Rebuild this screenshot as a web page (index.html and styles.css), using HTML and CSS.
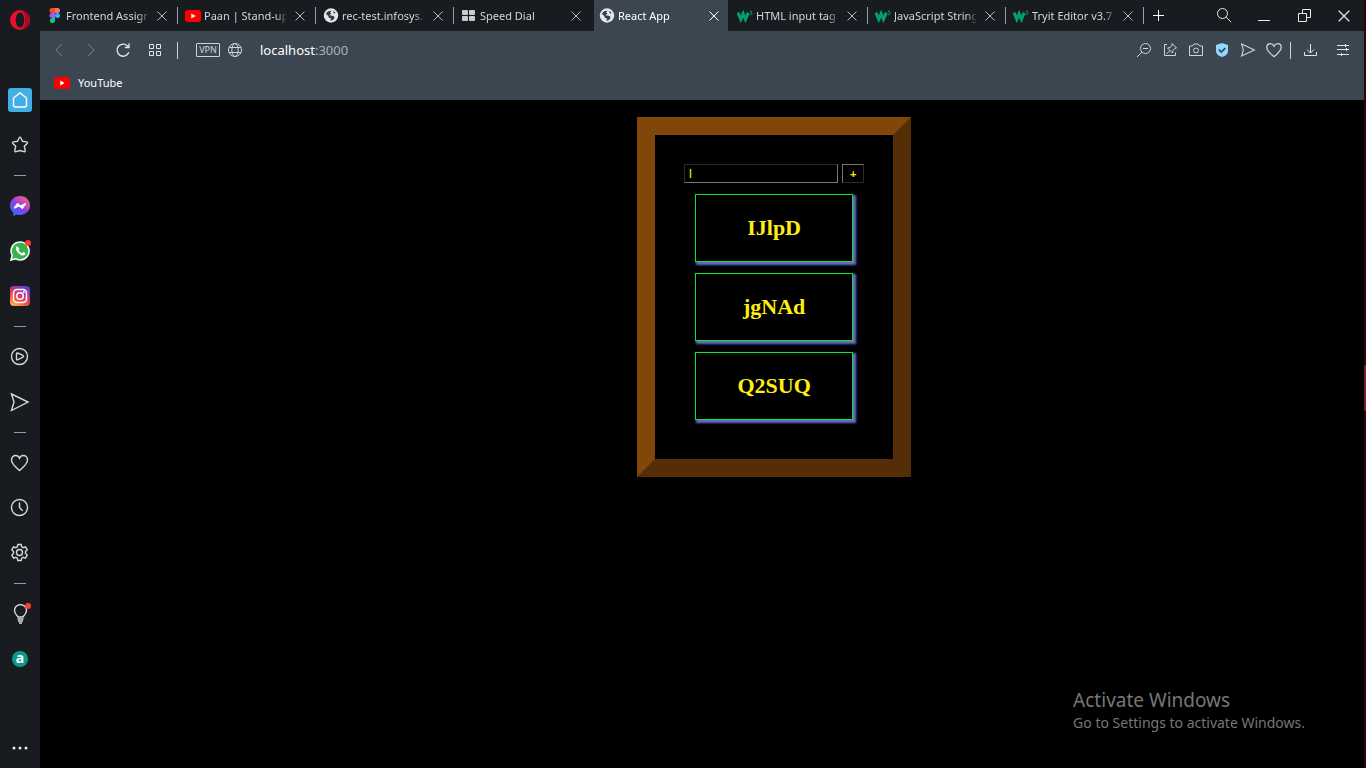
FILE: index.html
```html
<!DOCTYPE html>
<html lang="en">
<head>
<meta charset="utf-8">
<title>React App</title>
<link rel="stylesheet" href="styles.css">
</head>
<body>
<svg class="defs" aria-hidden="true">
  <symbol id="close" viewBox="0 0 12 12"><path d="M1.5 1.5l9 9M10.5 1.5l-9 9"/></symbol>
  <symbol id="youtube" viewBox="0 0 16 12"><rect width="16" height="12" rx="3" fill="#f00" stroke="none"/><path d="M6.3 3.6v4.8L10.6 6z" fill="#fff" stroke="none"/></symbol>
  <symbol id="earth" viewBox="0 0 16 16"><circle cx="8" cy="7.500" r="7.200" fill="#e4e7ea" stroke="none"/><path d="M3 6C4 3.500 6 2.500 8.500 2.700L7 4.700l1.500.8-2 1.700 3.800.8c1.300.3 1.500 1.800.7 2.800-.8 1.200-2.200 2-3.800 1.900l1-2-2.600-1.200-.2-1.600z" fill="#343c44" stroke="none"/><path d="M10 2.700l2.600 2-1.600 1z" fill="#343c44" stroke="none"/></symbol>
  <symbol id="w3" viewBox="0 0 17 12"><path d="M1 2.500l3 7 2.500-6 2.500 6L12 2.500" fill="none" stroke="#04a06c" stroke-width="3.200" stroke-linejoin="miter"/><path d="M13.600 1h2.200l-1 1.600c1.800.2 1.300 2.400-1.200 2" fill="none" stroke="#04a06c" stroke-width="1"/></symbol>
  <symbol id="heart" viewBox="0 0 20 20"><path d="M10 17.500C6 14 2 11 2 7.200 2 4.700 3.800 3 6 3c1.800 0 3.200 1 4 2.700C10.800 4 12.200 3 14 3c2.200 0 4 1.700 4 4.200 0 3.800-4 6.800-8 10.300z"/></symbol>
  <symbol id="send" viewBox="0 0 20 20"><path d="M2 2.500L18 10 2 17.500 4.200 10z"/></symbol>
</svg>

<div class="browser">
  <nav class="sidebar" aria-label="Sidebar">
    <button class="opera" aria-label="Opera menu"><svg width="20" height="20" viewBox="0 0 20 20"><path fill="#e9102c" stroke="none" fill-rule="evenodd" d="M10 0a10 10 0 100 20 10 10 0 000-20zm0 2.400c2.400 0 4.300 3.400 4.300 7.600s-1.900 7.600-4.300 7.600S5.700 14.200 5.700 10 7.600 2.400 10 2.400z"/><path fill="#a80a20" stroke="none" d="M10.500.2c5 .3 9.300 4.400 9.300 9.800s-4.200 9.500-9.300 9.800c2.800-1 4.800-5 4.800-9.800S13.300 1.200 10.500.2z"/></svg></button>
    <a class="side home" href="#" aria-label="Home"><svg width="24" height="24" viewBox="0 0 24 24"><path d="M5.500 10L12 5l6.500 5v7a2 2 0 01-2 2h-9a2 2 0 01-2-2z"/></svg></a>
    <a class="side" href="#" aria-label="Bookmarks"><svg width="20" height="20" viewBox="0 0 20 20"><path d="M9.100 3q.9-1.700 1.800 0l1.600 3.300 4 .6q1.700.4.6 1.600L14.300 11.200l.9 4.300q.1 1.700-1.400 1.200L10 15.500l-3.800 1.200q-1.500.5-1.400-1.200l.9-4.300L2.900 8.500Q1.800 7.300 3.500 6.900l4-.6z"/></svg></a>
    <hr class="rule">
    <a class="side" href="#" aria-label="Messenger"><svg width="20" height="20" viewBox="0 0 20 20"><defs><linearGradient id="gm" x1="0" y1="1" x2=".8" y2="0"><stop offset="0" stop-color="#078bff"/><stop offset=".5" stop-color="#8b39ee"/><stop offset="1" stop-color="#ff6371"/></linearGradient></defs><path d="M10 0C4.300 0 0 4.100 0 9.500c0 2.900 1.200 5.300 3.300 7V20l3-1.600c1.200.4 2.400.5 3.700.5 5.700 0 10-4.100 10-9.400S15.700 0 10 0z" fill="url(#gm)" stroke="none"/><path d="M4.200 12.200L7.600 7.700l3.100 2.500 4.900-2.500-3.300 4.500-3.200-2.500z" fill="#fff" stroke="#fff"/></svg></a>
    <a class="side" href="#" aria-label="WhatsApp"><svg width="20" height="20" viewBox="0 0 20 20"><path d="M1 19l1.200-4.600A9 9 0 1110.500 19a9 9 0 01-4.700-1.300z" fill="#38b34a" stroke="#f3f5f3" stroke-width="1.600"/><path d="M7.200 5.300C5.500 5.800 5.300 8 7 10.600c1.900 2.900 5.500 4.900 7.500 3.500.9-.6 1.100-1.800.7-2.100l-2-1-1.100 1.300c-1.700-.7-3-2-3.600-3.400l.9-1.200z" fill="#fff" stroke="none"/></svg><i class="dot"></i></a>
    <a class="side" href="#" aria-label="Instagram"><svg width="20" height="20" viewBox="0 0 20 20"><defs><linearGradient id="gi" x1=".1" y1="1" x2=".7" y2="0"><stop offset="0" stop-color="#fdc354"/><stop offset=".35" stop-color="#f6533c"/><stop offset=".65" stop-color="#c8348d"/><stop offset="1" stop-color="#5d42c9"/></linearGradient></defs><rect width="20" height="20" rx="4" fill="url(#gi)" stroke="none"/><g stroke="#fff" stroke-width="1.500"><rect x="3.500" y="3.500" width="13" height="13" rx="3.500"/><circle cx="10" cy="10" r="3.300"/></g><circle cx="13.900" cy="6.100" r="1" fill="#fff" stroke="none"/></svg></a>
    <hr class="rule">
    <a class="side" href="#" aria-label="Player"><svg width="20" height="20" viewBox="0 0 20 20"><circle cx="9.500" cy="9.500" r="8"/><path d="M6.500 6.700q0-1 1-.7l5 2.200q2 1 0 2.200l-5 2.400q-1 .4-1-.7z"/></svg></a>
    <a class="side" href="#" aria-label="My Flow"><svg width="20" height="20" viewBox="0 0 20 20"><path d="M1.500 2L18 10 1.500 18.500 4 10z"/></svg></a>
    <hr class="rule">
    <a class="side" href="#" aria-label="Favourites"><svg width="20" height="20" viewBox="0 0 20 20"><path d="M9.500 17.500C5.500 14 1.500 11 1.500 7 1.500 4.400 3.400 2.500 5.600 2.500c1.800 0 3.200 1 3.900 2.700.7-1.700 2.100-2.700 3.900-2.700 2.200 0 4.100 1.900 4.100 4.500 0 4-4 7-8 10.500z"/></svg></a>
    <a class="side" href="#" aria-label="History"><svg width="20" height="20" viewBox="0 0 20 20"><circle cx="9.500" cy="9.500" r="8"/><path d="M9.500 4.500v5l3.200 3.200"/></svg></a>
    <a class="side" href="#" aria-label="Settings"><svg width="20" height="20" viewBox="0.500 0.500 20 20"><circle cx="10" cy="10" r="3"/><path d="M8.300 2h3.400l.5 2.300 1.500.9 2.300-.8 1.700 3L16 9v2l1.700 1.600-1.700 3-2.300-.8-1.500.9-.5 2.300H8.300l-.5-2.300-1.500-.9-2.300.8-1.700-3L4 11V9L2.300 7.400l1.700-3 2.300.8 1.500-.9z"/></svg></a>
    <hr class="rule">
    <a class="side" href="#" aria-label="Tips"><svg width="20" height="20" viewBox="0 0 20 20"><path d="M8 13C7.600 11.300 4.500 10.200 4.500 6.600a6 6 0 0112 0c0 3.600-3.100 4.700-3.500 6.400zM7.500 15h6M8 17h5M9 19h3"/></svg><i class="dot"></i></a>
    <a class="side" href="#" aria-label="Amazon"><span class="amazon">a</span></a>
    <button class="more" aria-label="More"><svg width="20" height="6" viewBox="0 0 20 6"><g fill="#e8eaec" stroke="none"><circle cx="4" cy="3" r="1.500"/><circle cx="10" cy="3" r="1.500"/><circle cx="16" cy="3" r="1.500"/></g></svg></button>
  </nav>

  <div class="main">
    <header class="tabs">
      <div class="tab"><svg class="fav" viewBox="0 0 16 16"><path d="M5 0h3v5H5a2.500 2.500 0 010-5z" fill="#f24e1e" stroke="none"/><path d="M8 0h2.500a2.500 2.500 0 010 5H8z" fill="#ff7262" stroke="none"/><path d="M5 5h3v5H5a2.500 2.500 0 010-5z" fill="#a259ff" stroke="none"/><circle cx="10.500" cy="7.500" r="2.500" fill="#1abcfe" stroke="none"/><path d="M5 10h3v2.700A2.600 2.600 0 115 10z" fill="#0acf83" stroke="none"/></svg><span class="title">Frontend Assignment</span><button class="x" aria-label="Close tab"><svg width="12" height="12"><use href="#close"/></svg></button></div>
      <div class="tab"><svg class="fav"><use href="#youtube"/></svg><span class="title">Paan | Stand-up Comedy</span><button class="x" aria-label="Close tab"><svg width="12" height="12"><use href="#close"/></svg></button></div>
      <div class="tab"><svg class="fav"><use href="#earth"/></svg><span class="title">rec-test.infosys.com</span><button class="x" aria-label="Close tab"><svg width="12" height="12"><use href="#close"/></svg></button></div>
      <div class="tab last"><svg class="fav" viewBox="0 0 16 16"><g fill="#c9cccf" stroke="none"><rect x="1" y="2" width="6" height="5" rx="1"/><rect x="8" y="2" width="6" height="5" rx="1"/><rect x="1" y="8" width="6" height="5" rx="1"/><rect x="8" y="8" width="6" height="5" rx="1"/></g></svg><span class="title">Speed Dial</span><button class="x" aria-label="Close tab"><svg width="12" height="12"><use href="#close"/></svg></button></div>
      <div class="tab active"><svg class="fav"><use href="#earth"/></svg><span class="title">React App</span><button class="x" aria-label="Close tab"><svg width="12" height="12"><use href="#close"/></svg></button></div>
      <div class="tab"><svg class="fav"><use href="#w3"/></svg><span class="title">HTML input tag</span><button class="x" aria-label="Close tab"><svg width="12" height="12"><use href="#close"/></svg></button></div>
      <div class="tab"><svg class="fav"><use href="#w3"/></svg><span class="title">JavaScript String Methods</span><button class="x" aria-label="Close tab"><svg width="12" height="12"><use href="#close"/></svg></button></div>
      <div class="tab"><svg class="fav"><use href="#w3"/></svg><span class="title">Tryit Editor v3.7</span><button class="x" aria-label="Close tab"><svg width="12" height="12"><use href="#close"/></svg></button></div>
      <button class="newtab" aria-label="New tab"><svg width="12" height="12" viewBox="0 0 12 12"><path d="M6.500 0v11M1 5.500h11"/></svg></button>
      <div class="window">
        <button aria-label="Search tabs"><svg width="16" height="16" viewBox="0 0 16 16"><circle cx="6.500" cy="5.500" r="5"/><path d="M10.200 9.200l5 5"/></svg></button>
        <button aria-label="Minimize"><svg width="12" height="12" viewBox="0 0 12 12"><path d="M0 10.500h12"/></svg></button>
        <button aria-label="Restore"><svg width="13" height="13" viewBox="0 0 13 13"><path d="M.5 4.500h8v8h-8zM4.500 4.500v-4h8v8h-4"/></svg></button>
        <button aria-label="Close"><svg width="14" height="14"><use href="#close"/></svg></button>
      </div>
    </header>

    <div class="toolbar">
      <div class="group nav">
        <button aria-label="Back" disabled><svg width="16" height="16" viewBox="0 0 16 16"><path d="M11 2L5 8l6 6"/></svg></button>
        <button aria-label="Forward" disabled><svg width="16" height="16" viewBox="0 0 16 16"><path d="M5 2l6 6-6 6"/></svg></button>
        <button aria-label="Reload"><svg width="16" height="16" viewBox="0 0 16 16" stroke-width="1.400"><path d="M13.800 10.200A6 6 0 1113 4.600M14 1.500v4H9.800"/></svg></button>
        <button aria-label="Start page"><svg width="14" height="12" viewBox="0 0 14 12"><path d="M1.500.5h4v4h-4zM8.500.5h4v4h-4zM1.500 7.500h4v4h-4zM8.500 7.500h4v4h-4z"/></svg></button>
      </div>
      <span class="bar"></span>
      <button class="vpn">VPN</button>
      <button class="globe" aria-label="Site information"><svg width="16" height="16" viewBox="0 0 16 16"><circle cx="8" cy="8" r="6.500"/><ellipse cx="8" cy="8" rx="3.200" ry="6.500"/><path d="M2.200 5.500h11.600M2.200 10.500h11.600"/></svg></button>
      <div class="address">localhost<span>:3000</span></div>
      <div class="group tools">
        <button aria-label="Zoom"><svg width="16" height="16" viewBox="0 0 16 16"><circle cx="9.500" cy="6.500" r="5"/><path d="M5.900 10.100L1 15M7 6.500h5"/></svg></button>
        <button aria-label="Pin"><svg width="16" height="16" viewBox="0 0 16 16"><path d="M5 2.500H2.500v11h11v-3M10 1.500l4.500 4.500-1.500.3-2 2-.5 2.700L5.500 6l2.700-.5 1.700-2zM8 8.500l-3.500 3.500"/></svg></button>
        <button aria-label="Snapshot"><svg width="16" height="16" viewBox="0 0 16 16"><path d="M1.500 4h3l1.500-2h4l1.500 2h3v9.500h-13z"/><circle cx="8" cy="8.500" r="2.500"/></svg></button>
        <button aria-label="Ad blocker"><svg width="16" height="16" viewBox="0 0 16 16"><path d="M8 1l6 2v6c0 3-2.500 5-6 6-3.500-1-6-3-6-6V3z" fill="#93d7ff" stroke="none"/><path d="M4.800 7.500l2.500 2.500 4-4" stroke="#34404b" stroke-width="1.700"/></svg></button>
        <button aria-label="Send to My Flow"><svg width="16" height="16" stroke-width="1.400"><use href="#send"/></svg></button>
        <button aria-label="Add to bookmarks"><svg width="18" height="18" stroke-width="1.400"><use href="#heart"/></svg></button>
      </div>
      <span class="bar"></span>
      <button class="wide" aria-label="Downloads"><svg width="16" height="16" viewBox="0 0 16 16"><path d="M7.500 2v9M4 7.500L7.500 11 11 7.500M1.500 10v3.500h12V10"/></svg></button>
      <button class="wide" aria-label="Easy setup"><svg width="14" height="14" viewBox="0 0 14 14"><path d="M1 2.500h12M1 6.500h12M1 11.500h12M9.500 1v3M5.500 10v3M10.500 5v3"/></svg></button>
    </div>
    <div class="bookmarks"><a href="#"><svg width="16" height="12"><use href="#youtube"/></svg>YouTube</a></div>

    <main class="page">
      <section class="frame">
        <form class="entry">
          <input type="text" value="l" aria-label="New item">
          <button type="button" aria-label="Add item">+</button>
        </form>
        <h2 class="card">IJlpD</h2>
        <h2 class="card">jgNAd</h2>
        <h2 class="card">Q2SUQ</h2>
      </section>
      <aside class="notice">
        <p class="head">Activate Windows</p>
        <p class="sub">Go to Settings to activate Windows.</p>
      </aside>
    </main>
  </div>
  <div class="edge"><span></span></div>
</div>
</body>
</html>
```

FILE: styles.css
```css
* { box-sizing: border-box; }

body {
  margin: 0;
  background: #000;
  font-family: "Noto Sans", "Open Sans", sans-serif;
  font-size: 12px;
  color: #dcdfe2;
}

button {
  margin: 0;
  padding: 0;
  border: 0;
  background: none;
  color: inherit;
  font: inherit;
  display: flex;
  align-items: center;
  justify-content: center;
}

svg { display: block; fill: none; stroke: currentColor; }
.defs { position: absolute; width: 0; height: 0; }

.browser { display: flex; min-height: 100vh; }

/* Sidebar */
.sidebar {
  width: 40px;
  flex: none;
  display: flex;
  flex-direction: column;
  background: #181c20;
}
.opera { height: 40px; margin-bottom: 38px; }
.side {
  position: relative;
  height: 45px;
  padding-bottom: 1px;
  display: flex;
  align-items: center;
  justify-content: center;
  color: #d5d8db;
  text-decoration: none;
}
.side > svg { stroke-width: 1.4; }
.home > svg { background: #43ade5; border-radius: 3px; color: #fff; }
.rule {
  width: 12px;
  height: 1px;
  margin: 7px auto 8px;
  border: 0;
  background: #8b9ba9;
}
.dot {
  position: absolute;
  top: 11px;
  left: 25px;
  width: 6px;
  height: 6px;
  border-radius: 50%;
  background: #ff3b30;
}
.amazon {
  width: 16px;
  height: 16px;
  border-radius: 50%;
  background: #0a9a8c;
  color: #fff;
  font-size: 14px;
  font-weight: 700;
  line-height: 14px;
  text-align: center;
}
.more { height: 40px; margin-top: auto; }

/* Tab strip */
.main { flex: 1; min-width: 0; display: flex; flex-direction: column; }
.tabs {
  height: 31px;
  display: flex;
  align-items: stretch;
  background: #181c20;
}
.tab {
  position: relative;
  flex: 0 1 138px;
  min-width: 0;
  display: flex;
  align-items: center;
  gap: 3px;
  padding: 0 5px 0 7px;
  color: #d3d6d8;
}
.tab::after {
  content: "";
  position: absolute;
  right: 0;
  top: 7px;
  width: 1px;
  height: 17px;
  background: #93a1ad;
}
.tab.last::after, .tab.active::after { display: none; }
.active {
  flex-basis: 134px;
  margin: 0 2px;
  padding: 0 3px 0 5px;
  background: #3b4651;
  color: #fff;
}
.fav { flex: none; width: 16px; height: 16px; }
.title {
  flex: 1;
  min-width: 0;
  overflow: hidden;
  white-space: nowrap;
  font-size: 11px;
  line-height: 16px;
  mask-image: linear-gradient(to right, #000 72px, transparent 84px);
}
.x { width: 22px; color: #b9bdc0; }
.active .x { color: #fff; }
.newtab { width: 28px; color: #fff; }
.window { margin-left: auto; display: flex; color: #e6e8ea; }
.window button { width: 40px; }

/* Address bar */
.toolbar {
  height: 38px;
  display: flex;
  align-items: center;
  background: #3b4651;
  padding: 0 5px 0 3px;
  color: #cfd4d8;
}
.group { display: flex; }
.nav button { width: 32px; color: #e3e6e9; }
.nav button:disabled { color: #73808b; }
.bar { width: 1px; height: 17px; margin: 0 6px; background: #ced5da; }
.vpn {
  width: 24px;
  height: 14px;
  margin: 0 7px 0 12px;
  border: 1px solid #cfd4d8;
  border-radius: 1px;
  font-size: 9px;
  line-height: 12px;
}
.globe { margin-right: 17px; }
.address { flex: 1; color: #fff; font-size: 13px; line-height: 18px; }
.address span { color: #a5b2be; }
.tools button { width: 26px; }
.toolbar .tools + .bar { margin: 0 4px 0 3px; }
.wide { width: 32px; color: #e3e6e9; }

.bookmarks {
  height: 31px;
  padding: 0 14px;
  display: flex;
  align-items: center;
  background: #3b4651;
}
.bookmarks a {
  display: flex;
  align-items: center;
  gap: 8px;
  padding-bottom: 4px;
  color: #fff;
  font-size: 11px;
  line-height: 18px;
  text-decoration: none;
}

/* Page */
.page { flex: 1; position: relative; background: #000; }
.frame {
  width: 274px;
  margin: 17px 0 0 45.1%;
  padding: 29px 29px 39px;
  border: 18px solid;
  border-color: #80460a #552d06 #552d06 #80460a;
}
.entry { display: flex; gap: 4px; }
.entry input, .entry button {
  height: 19px;
  border: 1px solid;
  border-radius: 0;
  background: #000;
  color: #ffee11;
  font: 13px "Liberation Sans", sans-serif;
}
.entry input {
  flex: 1;
  min-width: 0;
  padding: 0 4px;
  border-color: #2b2b2b #767676 #767676 #2b2b2b;
  outline: 0;
}
.entry button {
  width: 22px;
  border-color: #767676 #2b2b2b #2b2b2b #767676;
  font-size: 11px;
  font-weight: bold;
}
.card {
  height: 68px;
  margin: 11px 11px 0;
  border: 1px solid #08e62e;
  box-shadow: 2px 2px 2px 1px #6a6acd;
  background: #000;
  color: #ffee11;
  font: bold 22px/66px "Liberation Serif", serif;
  text-align: center;
}
.notice {
  position: absolute;
  right: 59px;
  bottom: 35px;
  color: #777;
}
.notice p { margin: 0; }
.head { font-size: 19px; line-height: 26px; }
.sub { font-size: 14px; line-height: 20px; }

/* Right window edge */
.edge { width: 2px; flex: none; background: #2e0606; padding-top: 365px; }
.edge span { display: block; height: 46px; background: #7d2020; }
```
